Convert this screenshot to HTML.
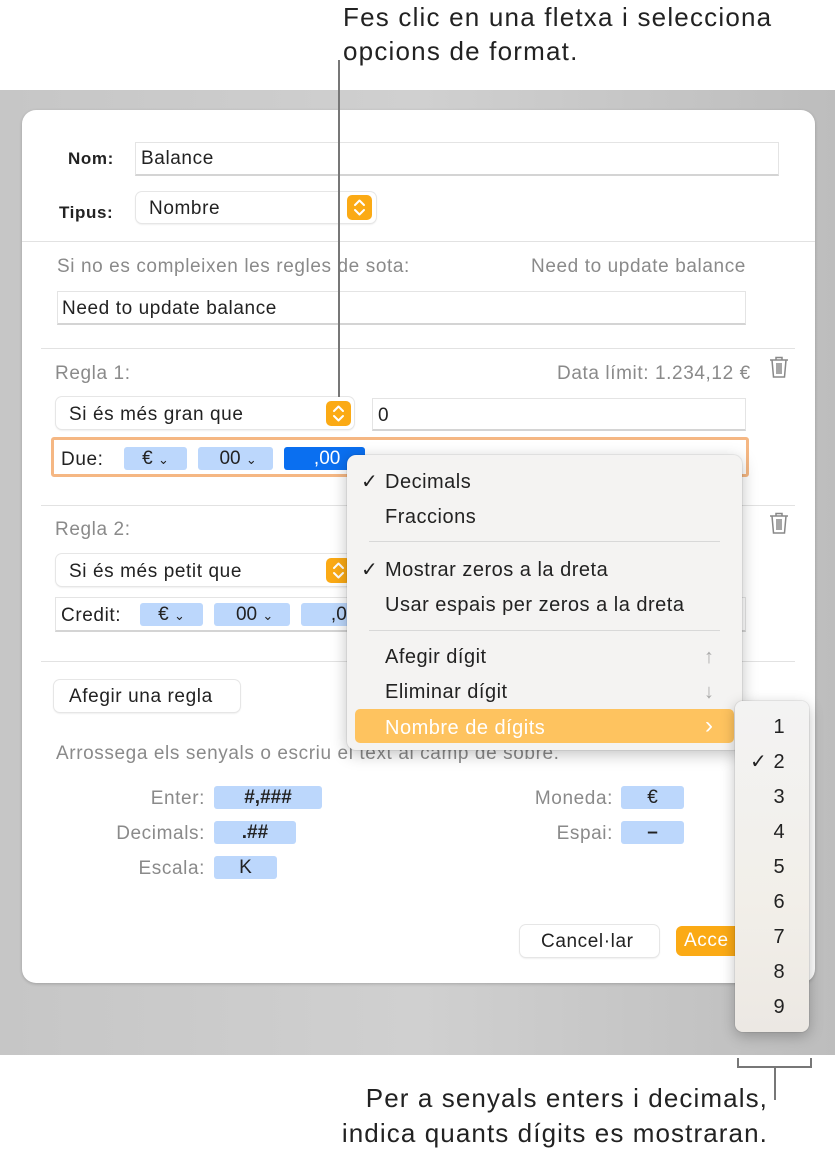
<!DOCTYPE html><html><head><meta charset="utf-8"><style>
*{margin:0;padding:0;box-sizing:border-box}
body{width:835px;height:1160px;background:#fff;position:relative;overflow:hidden;font-family:"Liberation Sans",sans-serif;color:#222}
.a{position:absolute;white-space:nowrap}
.t{font-size:19px;line-height:22px;letter-spacing:.6px}
.g{color:#8a8a8a}
.inp{position:absolute;background:#fff;border:1px solid #e4e4e4;border-bottom:2px solid #d4d4d4}
.pop{position:absolute;background:#fff;border-radius:6px;box-shadow:0 0 0 1px #e6e6e6,0 1px 2px rgba(0,0,0,.15)}
.st{position:absolute;width:25px;height:25px;border-radius:5px;background:#fbaa15;top:3px;right:4px}
.st svg{position:absolute;left:6px;top:4px}
.tok{position:absolute;background:#bcd7fc;border-radius:3px;height:23px;font-size:19px;line-height:23px;text-align:center}
.sep{position:absolute;height:1px;background:#e2e2e2}
.mi{position:absolute;left:38px;font-size:20px;line-height:24px;color:#222;letter-spacing:.5px}
</style></head><body>
<div class="a" style="left:343px;top:0px;font-size:26px;line-height:34px;letter-spacing:1.2px">Fes clic en una fletxa i selecciona<br>opcions de format.</div>
<div class="a" style="left:0;top:90px;width:835px;height:965px;background:linear-gradient(90deg,#c6c6c6,#d0d0d0 50%,#bdbdbd)"></div>
<div class="a" style="left:22px;top:110px;width:793px;height:873px;background:#fff;border-radius:14px;box-shadow:0 1px 3px rgba(0,0,0,.2)"></div>

<div class="a t" style="left:68px;top:148px;font-weight:bold;font-size:17px">Nom:</div>
<div class="inp" style="left:135px;top:142px;width:644px;height:34px"></div>
<div class="a t" style="left:141px;top:148px">Balance</div>
<div class="a t" style="left:59px;top:202px;font-weight:bold;font-size:17px">Tipus:</div>
<div class="pop" style="left:136px;top:192px;width:240px;height:31px"><div class="st" style="top:3px;right:4px"><svg width="13" height="17" viewBox="0 0 13 17" fill="none" stroke="#fff" stroke-width="2" stroke-linecap="round" stroke-linejoin="round"><path d="M2 6l4.5-4.5L11 6M2 11l4.5 4.5L11 11"/></svg></div></div>
<div class="a t" style="left:149px;top:198px">Nombre</div>
<div class="sep" style="left:22px;top:241px;width:793px"></div>
<div class="a t g" style="left:57px;top:256px">Si no es compleixen les regles de sota:</div>
<div class="a t g" style="left:531px;top:256px">Need to update balance</div>
<div class="inp" style="left:57px;top:291px;width:689px;height:34px"></div>
<div class="a t" style="left:62px;top:298px">Need to update balance</div>
<div class="sep" style="left:41px;top:348px;width:754px"></div>

<div class="a t g" style="left:55px;top:363px">Regla 1:</div>
<div class="a t g" style="left:557px;top:363px">Data límit: 1.234,12 €</div>
<svg class="a" style="left:769px;top:356px" width="20" height="22" viewBox="0 0 20 22" fill="none" stroke="#888" stroke-width="1.5"><path d="M1 4h18M7 4V1.5h6V4M3 4l1.5 17h11L17 4M8 7v11M10 7v11M12 7v11"/></svg>
<div class="pop" style="left:56px;top:397px;width:298px;height:32px"><div class="st" style="top:4px;right:3px"><svg width="13" height="17" viewBox="0 0 13 17" fill="none" stroke="#fff" stroke-width="2" stroke-linecap="round" stroke-linejoin="round"><path d="M2 6l4.5-4.5L11 6M2 11l4.5 4.5L11 11"/></svg></div></div>
<div class="a t" style="left:69px;top:404px">Si és més gran que</div>
<div class="inp" style="left:372px;top:398px;width:374px;height:33px"></div>
<div class="a t" style="left:378px;top:405px">0</div>
<div class="a" style="left:51px;top:437px;width:698px;height:40px;border:3px solid #f5b783;border-radius:3px;background:#fff"></div>
<div class="a t" style="left:61px;top:449px">Due:</div>
<div class="tok" style="left:124px;top:447px;width:63px">€ <span style="font-size:13px">⌄</span></div>
<div class="tok" style="left:198px;top:447px;width:75px">&nbsp;00 <span style="font-size:13px">⌄</span></div>
<div class="tok" style="left:284px;top:447px;width:81px;background:#0a6ff0;color:#fff">&nbsp;,00</div>
<div class="a" style="left:338px;top:60px;width:2px;height:337px;background:#777"></div>
<div class="sep" style="left:41px;top:505px;width:754px"></div>

<div class="a t g" style="left:55px;top:519px">Regla 2:</div>
<svg class="a" style="left:769px;top:512px" width="20" height="22" viewBox="0 0 20 22" fill="none" stroke="#888" stroke-width="1.5"><path d="M1 4h18M7 4V1.5h6V4M3 4l1.5 17h11L17 4M8 7v11M10 7v11M12 7v11"/></svg>
<div class="a t g" style="left:735px;top:519px">:</div>
<div class="pop" style="left:56px;top:554px;width:298px;height:32px"><div class="st" style="top:4px;right:3px"><svg width="13" height="17" viewBox="0 0 13 17" fill="none" stroke="#fff" stroke-width="2" stroke-linecap="round" stroke-linejoin="round"><path d="M2 6l4.5-4.5L11 6M2 11l4.5 4.5L11 11"/></svg></div></div>
<div class="a t" style="left:69px;top:561px">Si és més petit que</div>
<div class="inp" style="left:55px;top:597px;width:691px;height:35px"></div>
<div class="a t" style="left:61px;top:605px">Credit:</div>
<div class="tok" style="left:140px;top:603px;width:63px">€ <span style="font-size:13px">⌄</span></div>
<div class="tok" style="left:214px;top:603px;width:76px">&nbsp;00 <span style="font-size:13px">⌄</span></div>
<div class="tok" style="left:301px;top:603px;width:81px">&nbsp;,00</div>
<div class="inp" style="left:372px;top:597px;width:374px;height:35px"></div>
<div class="sep" style="left:41px;top:661px;width:754px"></div>

<div class="pop" style="left:54px;top:680px;width:186px;height:32px"></div>
<div class="a t" style="left:69px;top:686px">Afegir una regla</div>
<div class="a t g" style="left:56px;top:743px">Arrossega els senyals o escriu el text al camp de sobre.</div>
<div class="a t g" style="left:100px;top:788px;width:105px;text-align:right">Enter:</div>
<div class="tok" style="left:214px;top:786px;width:108px;font-weight:bold">#,###</div>
<div class="a t g" style="left:70px;top:823px;width:135px;text-align:right">Decimals:</div>
<div class="tok" style="left:214px;top:821px;width:82px;font-weight:bold">.##</div>
<div class="a t g" style="left:100px;top:858px;width:105px;text-align:right">Escala:</div>
<div class="tok" style="left:214px;top:856px;width:63px">K</div>
<div class="a t g" style="left:490px;top:788px;width:123px;text-align:right">Moneda:</div>
<div class="tok" style="left:621px;top:786px;width:63px">€</div>
<div class="a t g" style="left:500px;top:823px;width:113px;text-align:right">Espai:</div>
<div class="tok" style="left:621px;top:821px;width:63px;font-weight:bold">–</div>

<div class="pop" style="left:520px;top:925px;width:139px;height:32px"></div>
<div class="a t" style="left:541px;top:931px">Cancel·lar</div>
<div class="a" style="left:676px;top:926px;width:70px;height:30px;background:#fbaa15;border-radius:6px;color:#fff;font-size:19px;line-height:30px;padding-left:8px;letter-spacing:.6px">Acce</div>

<div class="a" style="left:347px;top:455px;width:395px;height:295px;background:#f4f3f2;border-radius:9px;box-shadow:0 4px 16px rgba(0,0,0,.25),0 0 0 1px rgba(0,0,0,.06)">
<div class="mi" style="left:14px;top:15px">✓</div><div class="mi" style="top:15px">Decimals</div>
<div class="mi" style="top:50px">Fraccions</div>
<div class="sep" style="left:22px;top:86px;width:351px;background:#d8d8d8"></div>
<div class="mi" style="left:14px;top:103px">✓</div><div class="mi" style="top:103px">Mostrar zeros a la dreta</div>
<div class="mi" style="top:138px">Usar espais per zeros a la dreta</div>
<div class="sep" style="left:22px;top:175px;width:351px;background:#d8d8d8"></div>
<div class="mi" style="top:190px">Afegir dígit</div><div class="mi" style="left:357px;top:190px;color:#aaa">↑</div>
<div class="mi" style="top:225px">Eliminar dígit</div><div class="mi" style="left:357px;top:225px;color:#aaa">↓</div>
<div class="a" style="left:8px;top:254px;width:379px;height:34px;background:#fec35f;border-radius:5px"></div>
<div class="mi" style="top:261px;color:#fff">Nombre de dígits</div><div class="mi" style="left:358px;top:259px;color:#fff;font-size:24px">›</div>
</div>

<div class="a" style="left:735px;top:701px;width:74px;height:331px;border-radius:8px;background:linear-gradient(#f3f3f3,#f2efe9 60%,#ece8e3);box-shadow:0 4px 14px rgba(0,0,0,.25),0 0 0 1px rgba(0,0,0,.06)"></div>
<div class="a" style="left:735px;top:710px;width:74px;text-align:center;font-size:20px;line-height:35px;padding-left:14px">1<br>2<br>3<br>4<br>5<br>6<br>7<br>8<br>9</div>
<div class="a" style="left:750px;top:750px;font-size:20px;line-height:24px">✓</div>

<div class="a" style="left:737px;top:1058px;width:75px;height:10px;border:2px solid #777;border-top:none"></div>
<div class="a" style="left:774px;top:1068px;width:2px;height:32px;background:#777"></div>
<div class="a" style="left:200px;top:1081px;width:568px;text-align:right;font-size:26px;line-height:35px;letter-spacing:1.1px">Per a senyals enters i decimals,<br>indica quants dígits es mostraran.</div>
</body></html>
